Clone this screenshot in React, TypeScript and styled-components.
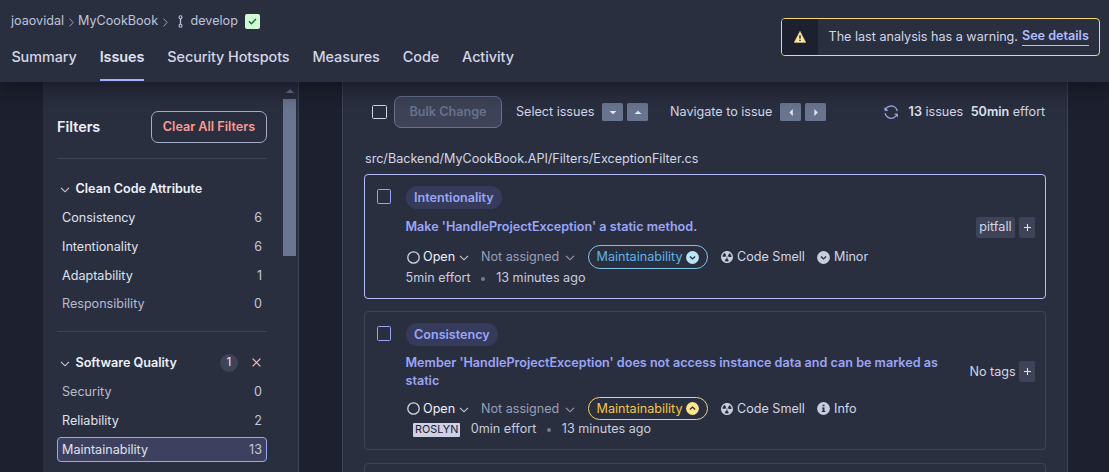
import React from 'react';
import styled, { createGlobalStyle } from 'styled-components';
import { GoSync } from 'react-icons/go';

const c = {
  page: '#1d202f',
  surface: '#2a2f40',
  line: '#3e4357',
  field: '#3e4357',
  text: '#d3d6e6',
  bright: '#eef0fa',
  muted: '#a6adc6',
  indigo: '#9ba5f7',
  control: '#6a7590',
};

const GlobalStyle = createGlobalStyle`
  * { box-sizing: border-box; }
  body {
    margin: 0;
    background: ${c.page};
    color: ${c.text};
    font: 400 12.6px/18px Inter, "Liberation Sans", sans-serif;
    overflow: hidden;
  }
  svg { display: block; flex: none; }
`;

const Page = styled.div`
  height: 472px;
  display: flex;
  flex-direction: column;
  overflow: hidden;
`;

const Header = styled.header`
  flex: none;
  height: 82px;
  display: flex;
  justify-content: space-between;
  padding: 0 9px 0 11px;
  background: ${c.surface};
  box-shadow: 0 2px 22px 4px rgba(10, 12, 20, 0.6);
  z-index: 1;
`;

const Crumbs = styled.nav`
  display: flex;
  align-items: center;
  height: 18px;
  margin-top: 12px;
  color: #bfc4d9;
`;

const CrumbGap = styled.span<{ $l: number; $r: number }>`
  margin: 2px ${(p) => p.$r}px 0 ${(p) => p.$l}px;
`;

const Branch = styled.span`
  margin-left: 7.5px;
`;

const Passed = styled.span`
  width: 15px;
  height: 15px;
  margin-left: 7px;
  display: grid;
  place-items: center;
  border-radius: 2px;
  background: #d0fbd5;
`;

const Tabs = styled.div`
  display: flex;
  gap: 23px;
  margin-top: 17px;
  padding-left: 0.4px;
`;

const Tab = styled.div<{ $active?: boolean }>`
  height: 34px;
  font-size: 14.4px;
  line-height: 20px;
  letter-spacing: -0.07px;
  font-weight: ${(p) => (p.$active ? 600 : 500)};
  color: ${(p) => (p.$active ? '#dfe2f1' : c.text)};
  border-bottom: 2px solid ${(p) => (p.$active ? '#a6adfb' : 'transparent')};
`;

const Warning = styled.div`
  display: flex;
  width: 319px;
  height: 38px;
  margin-top: 18px;
  border: 1px solid #f8d772;
  border-radius: 4px;
  overflow: hidden;
`;

const WarningIcon = styled.div`
  width: 36px;
  display: grid;
  place-items: center;
  background: ${c.page};
`;

const WarningText = styled.div`
  display: flex;
  align-items: center;
  gap: 4px;
  padding-left: 10.5px;
  white-space: nowrap;
`;

const DetailsLink = styled.a`
  font-weight: 600;
  line-height: 15px;
  padding-bottom: 2px;
  color: #b3bcfb;
  border-bottom: 1px solid #b3bcfb;
`;

const Body = styled.div`
  flex: 1;
  min-height: 0;
  display: flex;
  padding-left: 43px;
  gap: 43px;
`;

const Sidebar = styled.aside`
  width: 256px;
  display: flex;
  justify-content: space-between;
  padding: 0 2px 0 14px;
  background: ${c.surface};
  border-right: 1px solid ${c.line};
`;

const SidebarContent = styled.div`
  width: 210px;
  padding-top: 29px;
`;

const ScrollTrack = styled.div`
  width: 13px;
  display: flex;
  flex-direction: column;
  align-items: center;
  padding-top: 7px;
`;

const ScrollThumb = styled.div`
  width: 13px;
  height: 157px;
  margin-top: 6px;
  background: ${c.control};
`;

const FiltersHead = styled.div`
  display: flex;
  align-items: center;
  justify-content: space-between;
  height: 32px;
  font-size: 14.4px;
  font-weight: 600;
  color: ${c.bright};
`;

const ClearButton = styled.button`
  width: 116px;
  height: 32px;
  padding: 0;
  border: 1px solid #a6adc6;
  border-radius: 7px;
  background: transparent;
  color: #fb9a90;
  font: 600 12.6px/18px Inter, sans-serif;
  white-space: nowrap;
`;

const Divider = styled.div<{ $top: number }>`
  height: 1px;
  margin-top: ${(p) => p.$top}px;
  background: ${c.line};
`;

const FacetHead = styled.div<{ $top: number }>`
  display: flex;
  align-items: center;
  height: 18px;
  margin: ${(p) => p.$top}px 0 7.6px;
  padding-left: 2.5px;
  color: ${c.bright};
  font-weight: 600;
`;

const FacetTitle = styled.span`
  flex: 1;
  margin-left: 6px;
`;

const Count = styled.span`
  width: 18px;
  height: 18px;
  border-radius: 50%;
  margin-right: 14px;
  background: ${c.field};
  color: ${c.text};
  font-size: 11.5px;
  font-weight: 500;
  line-height: 17px;
  text-align: center;
`;

const FacetList = styled.div`
  display: flex;
  flex-direction: column;
  gap: 3.6px;
`;

const FacetItem = styled.div<{ $state?: 'empty' | 'selected' }>`
  display: flex;
  justify-content: space-between;
  align-items: center;
  height: 25.2px;
  padding: 0 4px;
  border: 1px solid ${(p) => (p.$state === 'selected' ? '#9ba5f7' : 'transparent')};
  border-radius: 4px;
  background: ${(p) => (p.$state === 'selected' ? '#3d405f' : 'transparent')};
  color: ${(p) => (p.$state === 'empty' ? '#b7bccf' : '#dfe2ee')};
`;

const FacetValue = styled.span`
  color: #c3c8da;
`;

const Main = styled.main`
  width: 726px;
  padding: 14px 21px 0;
  background: ${c.surface};
  border: 1px solid ${c.line};
  border-width: 0 1px;
`;

const Toolbar = styled.div`
  display: flex;
  align-items: center;
  height: 32px;
  padding-left: 8px;
`;

const Checkbox = styled.span<{ $w: number; $h: number; $color: string }>`
  flex: none;
  width: ${(p) => p.$w}px;
  height: ${(p) => p.$h}px;
  border: 1px solid ${(p) => p.$color};
  border-radius: 1.5px;
`;

const BulkButton = styled.button`
  width: 108px;
  height: 32px;
  margin: 0 14px 0 7px;
  padding: 0;
  border: 1px solid #69738f;
  border-radius: 7px;
  background: ${c.field};
  color: #69738f;
  font: 600 12.6px/18px Inter, sans-serif;
`;

const ToolLabel = styled.span<{ $w: number }>`
  width: ${(p) => p.$w}px;
  white-space: nowrap;
`;

const Keys = styled.span`
  display: flex;
  gap: 4px;
  margin-right: 22px;
`;

const Key = styled.span`
  width: 21px;
  height: 18px;
  display: grid;
  place-items: center;
  border-radius: 1.5px;
  background: ${c.control};
`;

const Totals = styled.div`
  display: flex;
  align-items: center;
  gap: 7.4px;
  margin-left: auto;
  padding-right: 0.8px;
  white-space: nowrap;
  b { font-weight: 600; color: #dfe2f1; }
  svg { margin-right: 3px; color: #b0b8fb; stroke-width: 0.4px; }
`;

const FilePath = styled.div`
  margin: 22px 0 6px 1px;
`;

const Card = styled.article<{ $h: number; $selected?: boolean }>`
  display: flex;
  width: 682px;
  height: ${(p) => p.$h}px;
  margin-bottom: ${(p) => (p.$selected ? 12 : 13)}px;
  padding: 11px 10px 0 12px;
  border: 1px solid ${(p) => (p.$selected ? '#b7bdfb' : c.line)};
  border-radius: 4px;
  > ${Checkbox} { margin-top: 3px; }
`;

const CardBody = styled.div`
  flex: 1;
  min-width: 0;
  margin-left: 14.5px;
`;

const Chip = styled.span`
  display: inline-block;
  height: 23px;
  padding: 0 8.5px;
  border-radius: 12px;
  background: #363b5c;
  color: ${c.indigo};
  font-weight: 600;
  line-height: 23px;
  vertical-align: top;
`;

const Title = styled.div<{ $top: number }>`
  width: 548px;
  margin-top: ${(p) => p.$top}px;
  color: ${c.indigo};
  font-weight: 600;
`;

const Meta = styled.div<{ $top: number; $h: number }>`
  display: flex;
  align-items: center;
  height: ${(p) => p.$h}px;
  margin-top: ${(p) => p.$top}px;
  white-space: nowrap;
`;

const Status = styled.span`
  display: flex;
  align-items: center;
  gap: 3.5px;
  width: 75.5px;
  padding-left: 1px;
  color: ${c.bright};
`;

const Assignee = styled.span`
  display: flex;
  align-items: center;
  justify-content: space-between;
  width: 94px;
  margin-right: 13px;
  color: #989fb8;
`;

const Pill = styled.span<{ $tone: 'low' | 'medium' }>`
  display: flex;
  align-items: center;
  justify-content: space-between;
  width: 120px;
  height: 100%;
  margin-right: 13px;
  padding: 0 8px 0 7.5px;
  border: 1px solid ${(p) => (p.$tone === 'low' ? '#82c3e6' : '#f5d36b')};
  border-radius: 12px;
  color: ${(p) => (p.$tone === 'low' ? '#5db4e8' : '#f3c740')};
`;

const Kind = styled.span<{ $w: number }>`
  display: flex;
  align-items: center;
  gap: 4px;
  width: ${(p) => p.$w}px;
`;

const Detail = styled.div`
  display: flex;
  align-items: center;
  height: 18px;
  color: #c8ccde;
`;

const Engine = styled.span`
  height: 14px;
  margin: 1px 10.5px 0 7.5px;
  padding: 0 2px;
  border-radius: 1px;
  background: #cdd1e6;
  color: #1d202f;
  font-size: 10.8px;
  line-height: 13px;
`;

const Dot = styled.span`
  width: 4px;
  height: 4px;
  margin: 1px 11px 0 10.5px;
  border-radius: 50%;
  background: #717b98;
`;

const Tags = styled.div<{ $top: number }>`
  display: flex;
  gap: 4px;
  height: 21px;
  margin-top: ${(p) => p.$top}px;
  white-space: nowrap;
`;

const Tag = styled.span`
  padding: 0 3.5px;
  border-radius: 2px;
  background: ${c.field};
  line-height: 20px;
`;

const NoTags = styled.span`
  margin-right: -0.7px;
  line-height: 22px;
`;

const AddTag = styled.span`
  width: 16px;
  display: grid;
  place-items: center;
  border-radius: 2px;
  background: ${c.field};
`;

const DownIcon = styled.svg`
  margin-top: 2px;
`;

const ClearIcon = styled.svg`
  margin-right: 6px;
`;

const Chevron = ({ color = '#c8ccde' }: { color?: string }) => (
  <DownIcon width="10" height="6" viewBox="0 0 10 6">
    <path d="M1 .8l4 4 4-4" fill="none" stroke={color} strokeWidth="1.1" />
  </DownIcon>
);

const Separator = () => (
  <svg width="5" height="9" viewBox="0 0 5 9">
    <path d="M.5 .6l3.7 3.9L.5 8.4" fill="none" stroke="#989fb8" strokeWidth="1" />
  </svg>
);

const ARROWS = {
  down: 'M3.5 6h7L7 9.2z',
  up: 'M3.5 9h7L7 5.8z',
  left: 'M8.8 4v7L5.4 7.5z',
  right: 'M5.4 4v7l3.4-3.5z',
};

const ArrowKey = ({ dir }: { dir: keyof typeof ARROWS }) => (
  <Key>
    <svg width="14" height="15" viewBox="0 0 14 15">
      <path d={ARROWS[dir]} fill="#e3e6f4" />
    </svg>
  </Key>
);

const Severity = ({ kind, fill }: { kind: 'down' | 'up' | 'info'; fill: string }) => (
  <svg width="13" height="13" viewBox="0 0 13 13">
    <circle cx="6.5" cy="6.5" r="6.4" fill={fill} />
    {kind === 'info' ? (
      <path d="M5.6 2.7h1.9v1.6H5.6zM5 5.4h2.5v3.5h.8v1.2H4.8V8.9h.8V6.6H5z" fill={c.surface} />
    ) : (
      <path
        d={kind === 'down' ? 'M3.9 5.4l2.6 2.5 2.6-2.5' : 'M3.9 7.6l2.6-2.5 2.6 2.5'}
        fill="none"
        stroke={c.surface}
        strokeWidth="1.4"
      />
    )}
  </svg>
);

const SmellIcon = () => (
  <svg width="12" height="12" viewBox="2 2 12 12">
    <path
      fill="#c8ccde"
      d="M8 2C4.7 2 2 4.7 2 8s2.7 6 6 6 6-2.7 6-6-2.7-6-6-6zm-.5 5.5h.9v.9h-.9v-.9zm-3.8.2c-.1 0-.2-.1-.2-.2 0-.4.1-1.2.6-2S5.3 4.2 5.6 4c.2 0 .3 0 .3.1l1.3 2.3c0 .1 0 .2-.1.2-.1.2-.2.3-.3.5-.1.2-.2.4-.2.5 0 .1-.1.2-.2.2l-2.7-.1zM9.9 12c-.3.2-1.1.5-2 .5-.9 0-1.7-.3-2-.5-.1 0-.1-.2-.1-.3l1.3-2.3c0-.1.1-.1.2-.1.2.1.3.1.5.1s.4 0 .5-.1c.1 0 .2 0 .2.1l1.3 2.3c.2.2.2.3.1.3zm2.5-4.1L9.7 8c-.1 0-.2-.1-.2-.2 0-.2-.1-.4-.2-.5 0-.1-.2-.3-.3-.4-.1 0-.1-.1-.1-.2l1.3-2.3c.1-.1.2-.1.3-.1.3.2 1 .7 1.5 1.5s.6 1.6.6 2c0 0-.1.1-.2.1z"
    />
  </svg>
);

const PlusIcon = () => (
  <svg width="7" height="7" viewBox="0 0 7 7">
    <path d="M3.5 0v7M0 3.5h7" stroke="#dfe2f1" strokeWidth="1.1" />
  </svg>
);

type IssueProps = {
  attribute: string;
  title: string;
  tone: 'low' | 'medium';
  severity: string;
  engine?: string;
  effort: string;
  tag?: string;
  height: number;
  titleTop: number;
  metaTop: number;
  metaHeight: number;
  tagsTop: number;
  selected?: boolean;
};

const Issue = (p: IssueProps) => (
  <Card $h={p.height} $selected={p.selected}>
    <Checkbox $w={14} $h={15} $color={c.indigo} />
    <CardBody>
      <Chip>{p.attribute}</Chip>
      <Title $top={p.titleTop}>{p.title}</Title>
      <Meta $top={p.metaTop} $h={p.metaHeight}>
        <Status>
          <svg width="13" height="13" viewBox="0 0 13 13">
            <circle cx="6.5" cy="6.5" r="5.7" fill="none" stroke="#d3d6e6" strokeWidth="1.3" />
          </svg>
          Open
          <Chevron />
        </Status>
        <Assignee>
          Not assigned
          <Chevron color="#989fb8" />
        </Assignee>
        <Pill $tone={p.tone}>
          Maintainability
          <Severity kind={p.tone === 'low' ? 'down' : 'up'} fill={p.tone === 'low' ? '#bbe5f7' : '#fde48f'} />
        </Pill>
        <Kind $w={96}>
          <SmellIcon />
          Code Smell
        </Kind>
        <Kind $w={60}>
          <Severity kind={p.tone === 'low' ? 'down' : 'info'} fill="#c8ccde" />
          {p.severity}
        </Kind>
      </Meta>
      <Detail>
        {p.engine && <Engine>{p.engine}</Engine>}
        {p.effort} effort
        <Dot />
        13 minutes ago
      </Detail>
    </CardBody>
    <Tags $top={p.tagsTop}>
      {p.tag ? <Tag>{p.tag}</Tag> : <NoTags>No tags</NoTags>}
      <AddTag>
        <PlusIcon />
      </AddTag>
    </Tags>
  </Card>
);

const attributes: [string, number][] = [
  ['Consistency', 6],
  ['Intentionality', 6],
  ['Adaptability', 1],
  ['Responsibility', 0],
];

const qualities: [string, number][] = [
  ['Security', 0],
  ['Reliability', 2],
  ['Maintainability', 13],
];

const Facet = ({ items, selected }: { items: [string, number][]; selected?: string }) => (
  <FacetList>
    {items.map(([name, value]) => (
      <FacetItem key={name} $state={name === selected ? 'selected' : value === 0 ? 'empty' : undefined}>
        {name}
        <FacetValue>{value}</FacetValue>
      </FacetItem>
    ))}
  </FacetList>
);

export default function App() {
  return (
    <Page>
      <GlobalStyle />
      <Header>
        <div>
          <Crumbs>
            joaovidal
            <CrumbGap $l={5} $r={4}>
              <Separator />
            </CrumbGap>
            MyCookBook
            <CrumbGap $l={5} $r={10}>
              <Separator />
            </CrumbGap>
            <svg width="5" height="13" viewBox="0 0 5 13">
              <g fill="none" stroke="#bfc4d9" strokeWidth="1.1">
                <circle cx="2.5" cy="2.2" r="1.5" />
                <circle cx="2.5" cy="10.8" r="1.5" />
                <path d="M2.5 3.7v5.6" strokeWidth="1.3" />
              </g>
            </svg>
            <Branch>develop</Branch>
            <Passed>
              <svg width="9" height="7" viewBox="0 0 9 7">
                <path d="M1 3.3l2.4 2.4L8 1" fill="none" stroke="#12683a" strokeWidth="1.4" />
              </svg>
            </Passed>
          </Crumbs>
          <Tabs>
            {['Summary', 'Issues', 'Security Hotspots', 'Measures', 'Code', 'Activity'].map((t) => (
              <Tab key={t} $active={t === 'Issues'}>
                {t}
              </Tab>
            ))}
          </Tabs>
        </div>
        <Warning>
          <WarningIcon>
            <svg width="12" height="12" viewBox="0 0 12 12">
              <path d="M6 .3L11.8 11.6H.2z" fill="#fde799" stroke="#fde799" strokeWidth=".4" strokeLinejoin="round" />
              <path d="M5.3 4.2h1.4v3.6H5.3zM5.3 8.7h1.4v1.4H5.3z" fill="#1d202f" />
            </svg>
          </WarningIcon>
          <WarningText>
            The last analysis has a warning.
            <DetailsLink>See details</DetailsLink>
          </WarningText>
        </Warning>
      </Header>
      <Body>
        <Sidebar>
          <SidebarContent>
            <FiltersHead>
              Filters
              <ClearButton>Clear All Filters</ClearButton>
            </FiltersHead>
            <Divider $top={15} />
            <FacetHead $top={20.8}>
              <Chevron />
              <FacetTitle>Clean Code Attribute</FacetTitle>
            </FacetHead>
            <Facet items={attributes} />
            <Divider $top={14} />
            <FacetHead $top={22}>
              <Chevron />
              <FacetTitle>Software Quality</FacetTitle>
              <Count>1</Count>
              <ClearIcon width="9" height="9" viewBox="0 0 9 9">
                <path d="M.6 .6l7.8 7.8M8.4 .6L.6 8.4" stroke="#fbc5bf" strokeWidth="1.2" />
              </ClearIcon>
            </FacetHead>
            <Facet items={qualities} selected="Maintainability" />
          </SidebarContent>
          <ScrollTrack>
            <svg width="8" height="4" viewBox="0 0 8 4">
              <path d="M0 4l4-4 4 4z" fill="#6a7590" />
            </svg>
            <ScrollThumb />
          </ScrollTrack>
        </Sidebar>
        <Main>
          <Toolbar>
            <Checkbox $w={15} $h={14} $color="#d3d6e6" />
            <BulkButton>Bulk Change</BulkButton>
            <ToolLabel $w={86}>Select issues</ToolLabel>
            <Keys>
              <ArrowKey dir="down" />
              <ArrowKey dir="up" />
            </Keys>
            <ToolLabel $w={110}>Navigate to issue</ToolLabel>
            <Keys>
              <ArrowKey dir="left" />
              <ArrowKey dir="right" />
            </Keys>
            <Totals>
              <GoSync size={14.4} />
              <span>
                <b>13</b> issues
              </span>
              <span>
                <b>50min</b> effort
              </span>
            </Totals>
          </Toolbar>
          <FilePath>src/Backend/MyCookBook.API/Filters/ExceptionFilter.cs</FilePath>
          <Issue
            attribute="Intentionality"
            title="Make 'HandleProjectException' a static method."
            tone="low"
            severity="Minor"
            effort="5min"
            tag="pitfall"
            height={125}
            titleTop={9}
            metaTop={9}
            metaHeight={24}
            tagsTop={31}
            selected
          />
          <Issue
            attribute="Consistency"
            title="Member 'HandleProjectException' does not access instance data and can be marked as static"
            tone="medium"
            severity="Info"
            engine="ROSLYN"
            effort="0min"
            height={139}
            titleTop={8}
            metaTop={7}
            metaHeight={23}
            tagsTop={38}
          />
          <Card $h={139} />
        </Main>
      </Body>
    </Page>
  );
}
